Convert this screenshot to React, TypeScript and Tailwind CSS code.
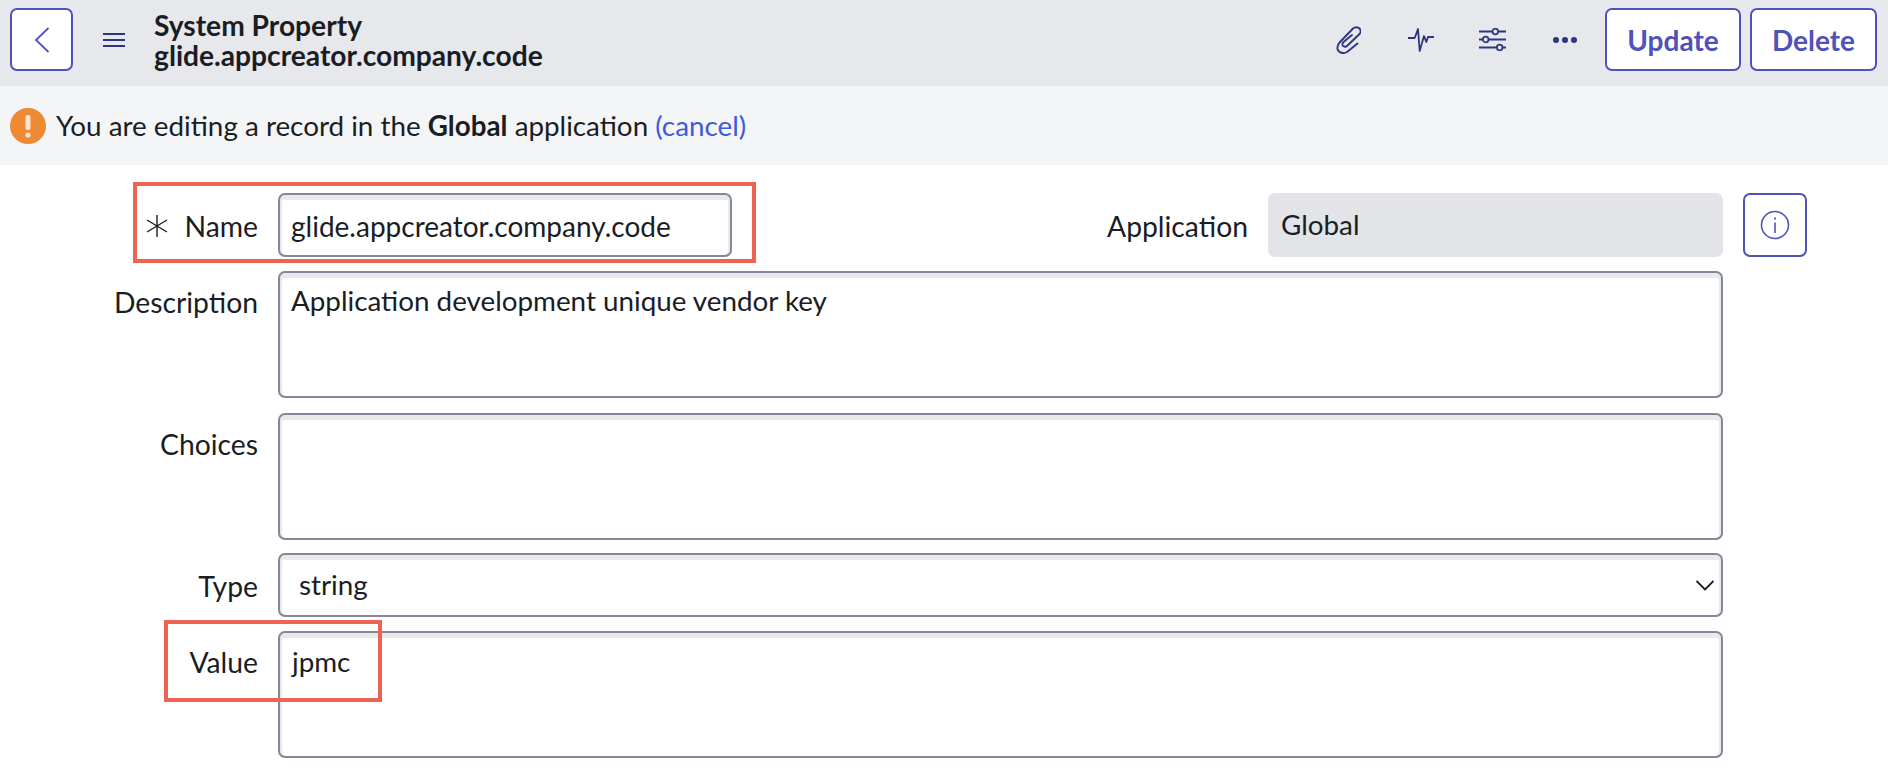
import React from 'react';

const lato = 'font-[Lato,"Liberation_Sans",sans-serif]';

const FieldBox: React.FC<{ className?: string; children?: React.ReactNode }> = ({ className = '', children }) => (
    <div className={`rounded-[7px] border-2 border-[#82889a] bg-white shadow-[inset_0_5px_0_#e8eaea,inset_-2px_0_0_#e8eaea,inset_2px_0_0_#e8eaea] text-[27.8px] text-[#1a1d24] ${className}`}>
        {children}
    </div>
);

const Label: React.FC<{ children: React.ReactNode; className?: string }> = ({ children, className = '' }) => (
    <div className={`w-[258px] shrink-0 text-right text-[28.3px] text-[#1a1d24] ${className}`}>{children}</div>
);

const Clip = () => (
    <svg width="25" height="28" viewBox="0 0 25 28" fill="none" stroke="#2f3580" strokeWidth="1.9" strokeLinecap="round" strokeLinejoin="round">
        <path d="M21.5 17.5 L11 26 C7.5 28 2.5 27 1.5 23 C1 20 2 18 4 16 L17 2.5 C19 0.8 22 0.8 23.5 2.5 C25 4 25 6.5 23.5 8 L11 20 C9.5 21.5 7 20.5 6.5 19 C6.2 18 6.5 17 7.5 16 L16 9" />
    </svg>
);

const Pulse = () => (
    <svg width="26" height="24" viewBox="0 0 26 24" fill="none" stroke="#2f3580" strokeWidth="1.8" strokeLinejoin="round">
        <path d="M0 10 H6.7 L10 1 L11.7 23 L16 8 L18.3 14 L20 9 H26" />
    </svg>
);

const Sliders = () => (
    <svg width="27" height="23" viewBox="0 0 27 23" fill="none" stroke="#2f3580" strokeWidth="1.8">
        <path d="M0 3.5 H27 M0 11.5 H27 M0 19.5 H27" />
        <circle cx="16.3" cy="3.5" r="2.8" fill="#e7e8ec" />
        <circle cx="6.7" cy="11.5" r="2.8" fill="#e7e8ec" />
        <circle cx="20.7" cy="19.5" r="2.8" fill="#e7e8ec" />
    </svg>
);

export default function App() {
    return (
        <div className={`relative min-h-[776px] bg-white ${lato}`}>
            {/* Header */}
            <header className="flex h-[86px] items-center bg-[#e7e8ec] pb-[7px] pl-[10px] pr-[11px]">
                <button className="flex h-[63px] w-[63px] items-center justify-center rounded-[7px] border-2 border-[#4f52b8] bg-white">
                    <svg width="16" height="26" viewBox="0 0 16 26" fill="none" stroke="#4f52b8" strokeWidth="1.8">
                        <path d="M14.5 1 L2 13 L14.5 25" />
                    </svg>
                </button>
                <svg className="ml-[30px]" width="22" height="14" viewBox="0 0 22 14" fill="none" stroke="#2f3580" strokeWidth="2">
                    <path d="M0 1 H22 M0 7 H22 M0 13 H22" />
                </svg>
                <div className="ml-[29px] mt-[1px] text-[28.2px] font-bold leading-[30px] text-[#1a1d24]">
                    <div>System Property</div>
                    <div>glide.appcreator.company.code</div>
                </div>
                <div className="ml-auto flex items-center">
                    <Clip />
                    <div className="ml-[47px]"><Pulse /></div>
                    <div className="ml-[45px]"><Sliders /></div>
                    <div className="ml-[47px] flex gap-[3px]">
                        <span className="h-[6px] w-[6px] rounded-full bg-[#2f3580]" />
                        <span className="h-[6px] w-[6px] rounded-full bg-[#2f3580]" />
                        <span className="h-[6px] w-[6px] rounded-full bg-[#2f3580]" />
                    </div>
                    <button className="ml-[28px] h-[63px] w-[136px] rounded-[7px] border-2 border-[#4f52b8] bg-white text-[28px] font-bold text-[#4f52b8]">Update</button>
                    <button className="ml-[9px] h-[63px] w-[127px] rounded-[7px] border-2 border-[#4f52b8] bg-white text-[28px] font-bold text-[#4f52b8]">Delete</button>
                </div>
            </header>

            {/* Notification */}
            <div className="flex h-[79px] items-center bg-[#f4f5f7] pl-[10px] text-[27.8px] text-[#1a1d24]">
                <svg width="36" height="36" viewBox="0 0 36 36">
                    <circle cx="18" cy="18" r="18" fill="#ee8a33" />
                    <rect x="15.5" y="7" width="5" height="15" rx="2" fill="#f8e4d2" />
                    <circle cx="18" cy="27" r="2.6" fill="#f8e4d2" />
                </svg>
                <span className="ml-[10px]">
                    You are editing a record in the <b>Global</b> application <span className="text-[#3e5bd8]">(cancel)</span>
                </span>
            </div>

            {/* Form */}
            <div className="flex flex-col pt-[28px]">
                <div className="flex items-center">
                    <Label className="flex items-center justify-end gap-[16px] pt-[2px]">
                        <svg width="24" height="22" viewBox="0 0 24 22" fill="none" stroke="#1a1d24" strokeWidth="1.4">
                            <path d="M12 0 V22 M2 5 L22 17 M22 5 L2 17" />
                        </svg>
                        <span>Name</span>
                    </Label>
                    <FieldBox className="ml-[20px] flex h-[64px] w-[454px] items-center pl-[11px] pt-[2px] text-[28px]">glide.appcreator.company.code</FieldBox>
                    <div className="w-[516px] shrink-0 pt-[2px] text-right text-[28.3px] text-[#1a1d24]">Application</div>
                    <div className="ml-[20px] flex h-[64px] w-[455px] items-center rounded-[7px] bg-[#e3e4e8] pl-[13px] text-[27.8px] text-[#1a1d24]">Global</div>
                    <button className="ml-[20px] flex h-[64px] w-[64px] items-center justify-center rounded-[7px] border-2 border-[#4f52b8] bg-white">
                        <svg width="30" height="30" viewBox="0 0 30 30" fill="none" stroke="#4f52b8">
                            <circle cx="15" cy="15" r="13.5" strokeWidth="1.6" />
                            <path d="M15 12.5 V23" strokeWidth="1.6" />
                            <path d="M15 7.5 V9.5" strokeWidth="1.8" />
                        </svg>
                    </button>
                </div>

                <div className="mt-[14px] flex">
                    <Label className="pt-[10px]">Description</Label>
                    <FieldBox className="ml-[20px] h-[127px] w-[1445px] pl-[11px] pt-[7px]">Application development unique vendor key</FieldBox>
                </div>

                <div className="mt-[15px] flex">
                    <Label className="pt-[10px]">Choices</Label>
                    <FieldBox className="ml-[20px] h-[127px] w-[1445px]" />
                </div>

                <div className="mt-[13px] flex items-center">
                    <Label className="pt-[2px]">Type</Label>
                    <FieldBox className="ml-[20px] flex h-[64px] w-[1445px] items-center justify-between pl-[19px] pr-[7px]">
                        <span>string</span>
                        <svg width="18" height="11" viewBox="0 0 18 11" fill="none" stroke="#1a1d24" strokeWidth="1.8">
                            <path d="M0.5 1 L9 9.5 L17.5 1" />
                        </svg>
                    </FieldBox>
                </div>

                <div className="mt-[14px] flex">
                    <Label className="pt-[10px]">Value</Label>
                    <FieldBox className="ml-[20px] h-[127px] w-[1445px] pl-[12px] pt-[8px]">jpmc</FieldBox>
                </div>
            </div>

            {/* Annotation boxes */}
            <div className="pointer-events-none absolute left-[133px] top-[182px] h-[81px] w-[623px] border-4 border-[#ee6352]" />
            <div className="pointer-events-none absolute left-[164px] top-[620px] h-[82px] w-[218px] border-4 border-[#ee6352]" />
        </div>
    );
}
